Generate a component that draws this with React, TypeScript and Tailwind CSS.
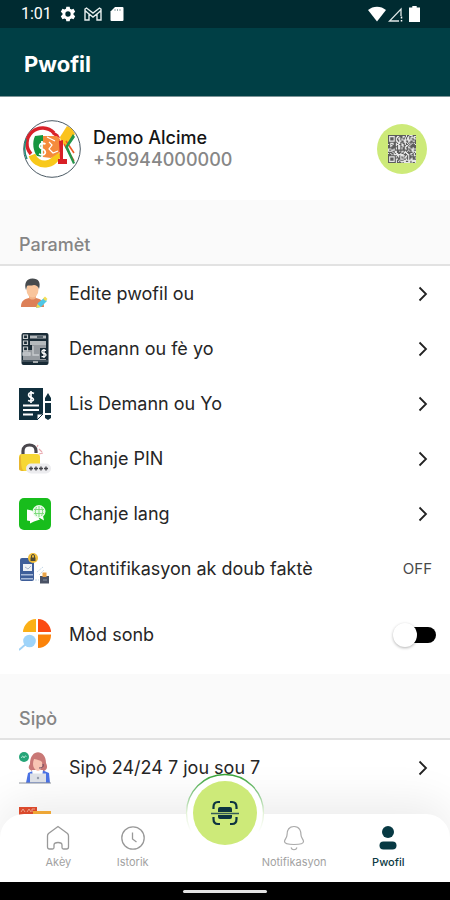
import React, { useState } from "react";

const QR_SIZE = 25;

function qrFinder(x: number, y: number) {
  const corners = [
    [0, 0],
    [0, QR_SIZE - 7],
  ];
  for (const [cx, cy] of corners) {
    const dx = x - cx;
    const dy = y - cy;
    if (dx >= 0 && dx < 7 && dy >= 0 && dy < 7) {
      const edge = dx === 0 || dx === 6 || dy === 0 || dy === 6;
      const core = dx > 1 && dx < 5 && dy > 1 && dy < 5;
      return edge || core ? 1 : 0;
    }
  }
  return -1;
}

function QrCode() {
  let d = "";
  let seed = 41;
  for (let y = 0; y < QR_SIZE; y++) {
    for (let x = 0; x < QR_SIZE; x++) {
      seed = (seed * 1103515245 + 12345) % 2147483648;
      const f = qrFinder(x, y);
      if (f === 1 || (f === -1 && (seed >> 12) % 2 === 0)) d += `M${x} ${y}h1v1h-1z`;
    }
  }
  return (
    <svg viewBox="0 0 25 25" className="size-7 bg-[#e6e6e6]" aria-hidden="true">
      <path d={d} fill="#5c5c5c" />
    </svg>
  );
}

function Avatar() {
  return (
    <svg viewBox="0 0 58 58" className="size-[58px] shrink-0" role="img" aria-label="Demo Alcime">
      <circle cx="29" cy="29" r="28.3" fill="#fff" stroke="#4b5a64" strokeWidth="1" />
      <path d="M9 35A13.500 13.500 0 0 0 35 33" fill="none" stroke="#f8c81a" strokeWidth="7" />
      <path d="M8 34A14 14 0 0 1 31 13" fill="none" stroke="#d9222a" strokeWidth="3.500" />
      <path d="M31 12c3 1 5 3 6 6l-4-1-4-3z" fill="#d9222a" />
      <path d="M12 16l8-1v22l-6-1c-4-5-5-14-2-20z" fill="#15963f" />
      <path d="M20 16h14l3 3v13l-9 6-8-1z" fill="#f58b3c" />
      <path d="M22.500 24c-6-3-8 4-3 5 5 2 3 8-3.500 5M19 21v16" fill="none" stroke="#fff" strokeWidth="1.800" />
      <path d="M26 22l3 3-3 4 4 4 5-2M24 17l8 4" fill="none" stroke="#fff" strokeWidth="1.200" />
      <path d="M37 17l7-11 5 3 3 5-9 12-5-4z" fill="#fbc31c" />
      <path d="M36 21l4-1v19h4v5h-9v-5h2z" fill="#d81f26" />
      <path d="M41 24l10 17M43 21l8 12" stroke="#ef5a24" strokeWidth="1.600" />
      <path d="M50 14l2 3-7 10 7 16-2 1-8-17z" fill="#25954a" />
      <path d="M3 19c-2 8-2 14 1 20" fill="none" stroke="#1d8a76" strokeWidth="1.500" />
    </svg>
  );
}

const iconBox = "size-8 shrink-0";

function EditIcon() {
  return (
    <svg viewBox="0 0 32 32" className={iconBox} aria-hidden="true">
      <path d="M10 16h7v6h-7z" fill="#f3b184" />
      <path d="M2 29c0-6 3-8 8-9 2 2 5 2 7 0 5 1 8 3 8 9z" fill="#dd8057" />
      <ellipse cx="13.500" cy="11.500" rx="6" ry="8" fill="#f9c59c" />
      <path d="M7 12C5 6 7 .5 13.500.5c6 0 8.500 4 6.500 10.500-1-3-3-4-5-4-3 1-6 0-7 1z" fill="#464a4d" />
      <path d="M17 30l2-5 6-5 3 3-6 6z" fill="#4ec7e6" />
      <path d="M24 20.500l2-2 2.500 2.500-2 2z" fill="#f4de57" />
      <path d="M17 30l1.500-4 3 3z" fill="#f3db4a" />
    </svg>
  );
}

function RequestIcon() {
  return (
    <svg viewBox="0 0 32 32" className={iconBox} aria-hidden="true">
      <rect x="2.500" width="27" height="32" rx="2" fill="#192b36" />
      <path d="M4 26V17h9v-5h14v15H4z" fill="#969ba0" />
      <path d="M11 2.500h16v3H11zM11 8h16v4H11z" fill="#b5babd" />
      <path d="M4.500 2h4v3.500h-4zM4.500 8h4v3.500h-4zM4.500 14h4v4h-4z" fill="none" stroke="#c6cacc" strokeWidth="1.200" />
      <path d="M4 20h7v2H4zM14 13v9h6" stroke="#c9cdcf" fill="none" strokeWidth="1.300" />
      <path d="M18 4h6" stroke="#192b36" strokeWidth="1.200" />
      <path d="M21 15h7v11h-7z" fill="#192b36" />
      <path d="M27 17.500c-5-2-5 3-2 3s3 4-2.500 3M25 16v9" fill="none" stroke="#fff" strokeWidth="1.300" />
      <path d="M3 28h26" stroke="#6e7880" />
      <path d="M14 28h5v2h-5z" fill="#a6abae" />
    </svg>
  );
}

function ListIcon() {
  return (
    <svg viewBox="0 0 32 32" className={iconBox} aria-hidden="true">
      <path d="M0 0h24v25l-6 7H0z" fill="#102f3d" />
      <path d="M18 32v-6h6z" fill="#fff" stroke="#102f3d" strokeWidth="1" />
      <path d="M15 5.500c-6-3-7 3-3 4 4 1 3 5-3 3M12 3v12" fill="none" stroke="#fff" strokeWidth="1.700" />
      <path d="M4 17.500h16M4 22h16M4 26.500h10" stroke="#fff" strokeWidth="1.800" />
      <path d="M26 10l3-5 3 5v3h-6zM26 15h6v10h-6zM26 27h6v3l-3 2-3-2z" fill="#102f3d" />
    </svg>
  );
}

function LockIcon() {
  return (
    <svg viewBox="0 0 32 32" className={iconBox} aria-hidden="true">
      <path d="M4 12V8c0-8 13-8 13 0v2" fill="none" stroke="#4a474d" strokeWidth="3.200" />
      <rect y="11" width="21" height="17" rx="3" fill="#f6d735" />
      <path d="M0 15v10c0 3 2 3 5 3-3-2-3-7-3-17z" fill="#e8b62e" />
      <path d="M20 6l3 3M20 11l4-1M18 4l1-2" stroke="#e8a7ae" strokeWidth="1.200" />
      <rect x="7" y="20.500" width="25" height="10" rx="5" fill="#ececef" />
      <path
        d="M10 25.500h4M15 25.500h4M20 25.500h4M25 25.500h4M12 23.500v4M17 23.500v4M22 23.500v4M27 23.500v4"
        stroke="#45454b"
        strokeWidth="1.400"
      />
    </svg>
  );
}

function LanguageIcon() {
  return (
    <svg viewBox="0 0 32 32" className={iconBox} aria-hidden="true">
      <rect width="32" height="32" rx="5" fill="#18bd1c" />
      <path d="M8 11.500l5 1 8 9-6 2-4 2v-2.500l-3-.5z" fill="#fff" />
      <circle cx="20" cy="13.500" r="6.500" fill="#eafbe9" />
      <path d="M24 18l1 4.500-5-3z" fill="#fff" />
      <path
        d="M15 11.500h10M15 15.500h10M20 8v11M17.500 9c-1.500 3-1.500 6 0 9M22.500 9c1.500 3 1.500 6 0 9"
        stroke="#75d974"
        strokeWidth="0.900"
        fill="none"
      />
    </svg>
  );
}

function TwoFactorIcon() {
  return (
    <svg viewBox="0 0 32 32" className={iconBox} aria-hidden="true">
      <rect x="1" y="5" width="14" height="23" rx="2" fill="#3e5e99" />
      <path d="M4 11h9v7H4z" fill="#eef1f5" />
      <path d="M6 14l3 2 3-3" fill="none" stroke="#a6b6cc" />
      <path d="M2 21h12v1.500H2zM2 25h12v1.500H2z" fill="#a8bad8" />
      <circle cx="14" cy="5" r="5" fill="#efbd3b" />
      <path d="M11.500 4.500h5V8h-5z" fill="#4e4a35" />
      <path d="M12.500 5V3a1.500 1.500 0 0 1 3 0v2" fill="none" stroke="#4e4a35" />
      <path d="M18 19l6-5M20 22l5-5M16 27h4" stroke="#c4d8e8" strokeDasharray="2 1" />
      <path d="M21 23h9v7.500h-9z" fill="#4a5265" />
      <path d="M23.500 19.500h4V24h-4z" fill="#e9a448" />
      <path d="M24 27h4" stroke="#8591a3" />
    </svg>
  );
}

function DarkModeIcon() {
  return (
    <svg viewBox="0 0 32 32" className={iconBox} aria-hidden="true">
      <path d="M17 13V0a13.500 13.500 0 0 0-13 13z" fill="#fbb016" />
      <path d="M19 13V0a13.500 13.500 0 0 1 13 13z" fill="#fb4a12" />
      <path d="M19 15.500h13A13 13 0 0 1 19 29z" fill="#fb830a" />
      <path d="M0 31l7-6" stroke="#9fd1f5" strokeWidth="1.800" />
      <circle cx="10.500" cy="22" r="6.300" fill="#9ed4fa" />
    </svg>
  );
}

function SupportIcon() {
  return (
    <svg viewBox="0 0 32 32" className={iconBox} aria-hidden="true">
      <path d="M11 12c0-16 16-15 16-1 2 4 1 7-2 8H13c-4-2-4-4-2-7z" fill="#c97876" />
      <path d="M7 31l2-10 7-3h7l7 3 1 10z" fill="#4b73e5" />
      <path d="M13 18h11l-1 7h-9z" fill="#fff" />
      <path d="M15 7c4 1 6 1 8 3 1 6-2 9-4 9-5-1-6-7-4-12z" fill="#f8c5b3" />
      <path d="M24 12c1 3-1 4-4 4" fill="none" stroke="#684b62" strokeWidth="1" />
      <path d="M11 21.500h16v9H11z" fill="#dfe2e8" />
      <circle cx="19" cy="26" r="1.200" fill="#969dac" />
      <path d="M0 31h32" stroke="#8d939c" strokeWidth="1" />
      <circle cx="5" cy="5" r="5" fill="#25a578" />
      <path d="M2.500 6c1-3 2-2 2.500 0 1-3 2-2 2.500-1" fill="none" stroke="#b8ead8" strokeWidth="1" />
    </svg>
  );
}

function FaqIcon() {
  return (
    <svg viewBox="0 0 32 32" className={iconBox} aria-hidden="true">
      <rect width="18" height="14" fill="#e44d2e" />
      <path d="M2 5l2-3 2 3M8 5l2-3 2 3M13 5V2h3" stroke="#f6b39e" strokeWidth="0.900" fill="none" />
      <path d="M14 4h18v12H14z" fill="#fbb03a" />
    </svg>
  );
}

function Chevron() {
  return (
    <svg viewBox="0 0 22 22" className="size-[22px] shrink-0" aria-hidden="true">
      <path d="M7.500 4.500l6.500 6.500-6.500 6.500" fill="none" stroke="#222" strokeWidth="1.800" />
    </svg>
  );
}

function LinkRow({ icon, label }: { icon: React.ReactNode; label: string }) {
  return (
    <li>
      <button type="button" className="flex h-[55px] w-full items-center gap-[18px] pr-4 pl-[19px] text-left">
        {icon}
        <span className="flex-1">{label}</span>
        <Chevron />
      </button>
    </li>
  );
}

function SectionTitle({ children }: { children: string }) {
  return (
    <h2 className="flex h-[66px] items-end border-b-2 border-[#e2e2e2] bg-[#fafafa] px-[19px] pb-2 font-medium text-[#858585]">
      {children}
    </h2>
  );
}

function StatusBar() {
  return (
    <div className="flex h-7 shrink-0 items-center justify-between bg-[#002b31] pr-[30px] pl-[21px] text-white">
      <div className="flex items-center gap-2">
        <span className="font-[Roboto,sans-serif] text-base">1:01</span>
        <svg viewBox="0 0 24 24" className="size-4" aria-hidden="true">
          <path
            fill="#fff"
            fillRule="evenodd"
            d="M9.500 1h5l.6 3.200 2.200 1.200 3-1.100 2.500 4.400-2.500 2v2.600l2.500 2-2.500 4.400-3-1.100-2.200 1.200-.6 3.200h-5l-.6-3.200-2.200-1.200-3 1.100-2.500-4.400 2.500-2v-2.600l-2.500-2 2.500-4.400 3 1.100 2.200-1.200zM12 8a4 4 0 1 0 0 8 4 4 0 0 0 0-8z"
          />
        </svg>
        <svg viewBox="0 0 18 14" className="h-[14px] w-[18px]" aria-hidden="true">
          <path
            d="M1 13V2l1.500-1L9 6l6.500-5L17 2v11h-4V7L9 10 5 7v6H1zM5 7L1 3.500M13 7l4-3.500"
            fill="none"
            stroke="#e6eeee"
            strokeWidth="1.400"
          />
        </svg>
        <svg viewBox="0 0 14 16" className="h-4 w-[14px]" aria-hidden="true">
          <path d="M5 1h7.500a1 1 0 0 1 1 1v12a1 1 0 0 1-1 1h-11a1 1 0 0 1-1-1V5.500z" fill="#fff" />
          <path d="M5 3v2M7.500 3v2M10 3v2" stroke="#8fa3a5" />
        </svg>
      </div>
      <div className="flex items-center gap-[2px]">
        <svg viewBox="0 0 18 16" className="h-4 w-[18px]" aria-hidden="true">
          <path d="M0 4c5-4.500 13-4.500 18 0L9 15.500z" fill="#fff" />
        </svg>
        <svg viewBox="0 0 15 15" className="size-[15px]" aria-hidden="true">
          <path d="M11 14H1.500L13 2v7" fill="none" stroke="#dfe8e8" strokeWidth="1.300" />
          <path d="M13.500 9.500v2M13.500 13v1.500" stroke="#fff" strokeWidth="1.500" />
        </svg>
        <svg viewBox="0 0 10 16" className="ml-1 h-4 w-[11px]" preserveAspectRatio="none" aria-hidden="true">
          <path d="M3 0h4v1.500h3V16H0V1.500h3z" fill="#fff" />
        </svg>
      </div>
    </div>
  );
}

function NavItem({ icon, label, active }: { icon: React.ReactNode; label: string; active?: boolean }) {
  return (
    <a
      href="#"
      aria-current={active ? "page" : undefined}
      className={
        active
          ? "flex flex-col items-center gap-[3px] text-[11px] leading-4 font-medium text-[#0c3a44]"
          : "flex flex-col items-center gap-[3px] text-[11px] leading-4 text-[#a2a2a2]"
      }
    >
      {icon}
      {label}
    </a>
  );
}

function BottomNav() {
  return (
    <footer className="absolute inset-x-0 bottom-0">
      <nav className="relative flex h-[68px] items-start justify-evenly rounded-t-[24px] bg-white pt-[11px] shadow-[0_-12px_44px_rgba(0,0,0,0.08)]">
        <NavItem
          label="Akèy"
          icon={
            <svg viewBox="0 0 24 26" className="h-[26px] w-6" fill="none" stroke="#999" strokeWidth="1.300" aria-hidden="true">
              <path d="M1.500 11q0-1.500 1-2.500L12 1.500 21.500 8.500q1 1 1 2.500v11q0 2-2 2h-3q-1.500 0-1.500-1.500V20q0-2.500-4-2.500T8 20v2.500Q8 24 6.500 24h-3q-2 0-2-2z" />
            </svg>
          }
        />
        <NavItem
          label="Istorik"
          icon={
            <svg viewBox="0 0 24 26" className="h-[26px] w-6" fill="none" stroke="#999" strokeWidth="1.300" aria-hidden="true">
              <circle cx="12" cy="13" r="11.200" />
              <path d="M11.500 7.500v6.500l4 3" />
            </svg>
          }
        />
        <div className="w-[22px]" />
        <NavItem
          label="Notifikasyon"
          icon={
            <svg viewBox="0 0 24 26" className="h-[26px] w-6" fill="none" stroke="#aaa" strokeWidth="1.200" aria-hidden="true">
              <path d="M12 1.500c-6 0-7 5-7 8.500 0 3-2.500 4-2.500 6.500 0 2 2 3 9.500 3s9.500-1 9.500-3c0-2.500-2.500-3.500-2.500-6.500 0-3.500-1-8.500-7-8.500zM9 22.500c1 3 5 3 6 0" />
            </svg>
          }
        />
        <NavItem
          active
          label="Pwofil"
          icon={
            <svg viewBox="0 0 24 26" className="h-[26px] w-6" fill="#073943" aria-hidden="true">
              <circle cx="12" cy="7" r="6" />
              <rect x="3.500" y="16.500" width="17" height="8" rx="4" />
            </svg>
          }
        />
        <div className="absolute inset-x-0 -top-[41px] flex justify-center">
          <div className="relative grid size-20 place-items-center">
            <svg viewBox="0 0 80 80" className="absolute inset-0 size-20" aria-hidden="true">
              <defs>
                <linearGradient id="ring" x1="0" y1="0" x2="0" y2="1">
                  <stop offset="0" stopColor="#36a236" />
                  <stop offset="0.250" stopColor="#8dc98d" />
                  <stop offset="0.500" stopColor="#e4f3d8" />
                  <stop offset="0.750" stopColor="#fff" />
                </linearGradient>
              </defs>
              <circle cx="40" cy="40" r="38.500" fill="#fff" stroke="url(#ring)" strokeWidth="1.300" />
            </svg>
            <button
              type="button"
              aria-label="Scan"
              className="relative grid size-16 place-items-center rounded-full bg-[#cdea79]"
            >
              <svg viewBox="0 0 28 26" className="h-[26px] w-7" fill="none" stroke="#0d3440" strokeWidth="2.200" aria-hidden="true">
                <path d="M9 2H7Q2.500 2 2.500 7v2M19 2h2q4.500 0 4.500 5v2M9 24H7q-4.500 0-4.500-5v-2M19 24h2q4.500 0 4.500-5v-2" />
                <path d="M7 12V9q0-2 2-2h10q2 0 2 2v3zM7 15v2q0 2 2 2h10q2 0 2-2v-2z" fill="#0d3440" stroke="none" />
                <path d="M0 13.500h28" strokeWidth="1.500" stroke="#365d56" />
              </svg>
            </button>
          </div>
        </div>
      </nav>
      <div className="flex h-[18px] justify-center bg-black pt-2">
        <div className="h-[3px] w-[84px] rounded-full bg-[#e4e4e4]" />
      </div>
    </footer>
  );
}

export default function App() {
  const [dark, setDark] = useState(false);
  return (
    <div className="relative flex h-screen flex-col overflow-hidden bg-white font-[Inter,'Noto_Sans',sans-serif] text-[18px] leading-[22px] text-[#262626]">
      <StatusBar />
      <header className="flex h-[69px] shrink-0 items-center border-b border-[#7d9497] bg-[#003f45] px-6">
        <h1 className="pt-1 text-[22px] leading-7 font-bold text-white">Pwofil</h1>
      </header>
      <main className="flex-1 overflow-y-auto pb-[86px] [scrollbar-width:none]">
        <section className="flex h-[103px] items-center gap-3 px-[23px]">
          <Avatar />
          <div className="flex-1 font-medium">
            <p className="text-[#151515]">Demo Alcime</p>
            <p className="text-[#878787]">+50944000000</p>
          </div>
          <button type="button" aria-label="QR" className="grid size-[50px] place-items-center rounded-full bg-[#cdea79]">
            <QrCode />
          </button>
        </section>

        <section>
          <SectionTitle>Paramèt</SectionTitle>
          <ul>
            <LinkRow icon={<EditIcon />} label="Edite pwofil ou" />
            <LinkRow icon={<RequestIcon />} label="Demann ou fè yo" />
            <LinkRow icon={<ListIcon />} label="Lis Demann ou Yo" />
            <LinkRow icon={<LockIcon />} label="Chanje PIN" />
            <LinkRow icon={<LanguageIcon />} label="Chanje lang" />
            <li>
              <button type="button" className="flex h-[55px] w-full items-center gap-[18px] pr-[18px] pl-[19px] text-left">
                <TwoFactorIcon />
                <span className="flex-1">Otantifikasyon ak doub faktè</span>
                <span className="text-[15px] text-[#4a4a4a]">OFF</span>
              </button>
            </li>
            <li>
              <label className="relative flex h-[78px] items-center gap-[18px] pr-[14px] pl-[19px]">
                <DarkModeIcon />
                <span className="flex-1">Mòd sonb</span>
                <input
                  type="checkbox"
                  role="switch"
                  checked={dark}
                  onChange={(e) => setDark(e.target.checked)}
                  className="sr-only"
                />
                <span className={dark ? "flex flex-row-reverse items-center" : "flex items-center"}>
                  <span className="z-10 size-6 rounded-full bg-white shadow-[0_1px_3px_rgba(0,0,0,0.3)]" />
                  <span className={dark ? "-mr-3 h-4 w-[31px] rounded-full bg-black" : "-ml-3 h-4 w-[31px] rounded-full bg-black"} />
                </span>
              </label>
            </li>
          </ul>
        </section>

        <section>
          <SectionTitle>Sipò</SectionTitle>
          <ul>
            <LinkRow icon={<SupportIcon />} label="Sipò 24/24 7 jou sou 7" />
            <LinkRow icon={<FaqIcon />} label="Kesyon yo poze souvan" />
          </ul>
        </section>
      </main>
      <BottomNav />
    </div>
  );
}
